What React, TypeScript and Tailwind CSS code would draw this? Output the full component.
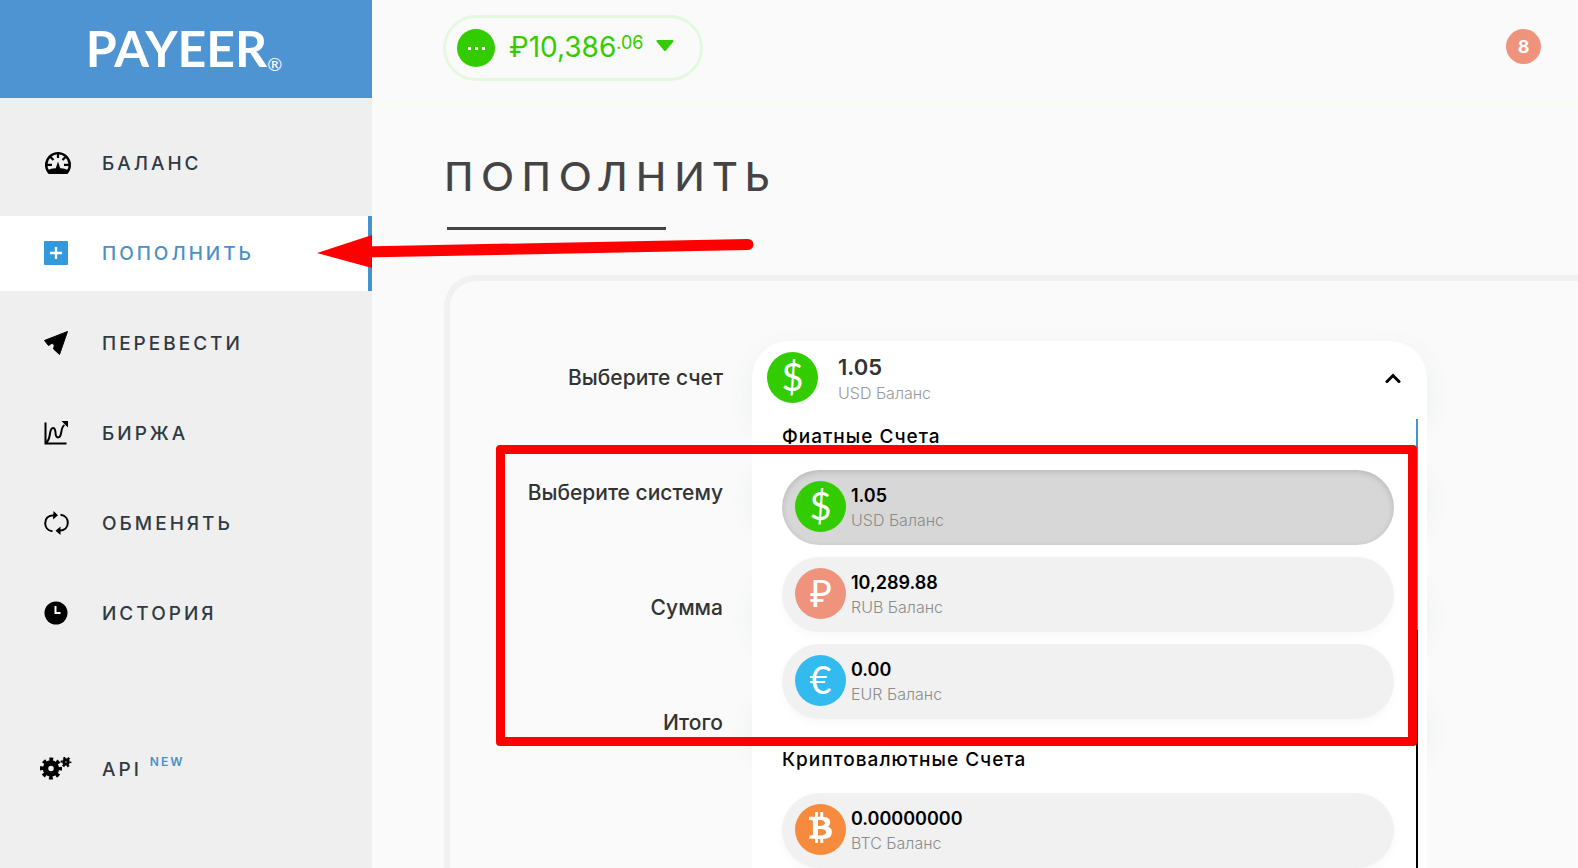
import { useState } from "react";
import type { ReactNode } from "react";
import { FaBtc } from "react-icons/fa";

type Account = {
  id: string;
  amount: string;
  label: string;
  color: string;
  icon: ReactNode;
};

const fiatAccounts: Account[] = [
  { id: "usd", amount: "1.05", label: "USD Баланс", color: "bg-[#33cc00]", icon: "$" },
  { id: "rub", amount: "10,289.88", label: "RUB Баланс", color: "bg-[#f0937c]", icon: "₽" },
  { id: "eur", amount: "0.00", label: "EUR Баланс", color: "bg-[#33bbf0]", icon: "€" },
];

const cryptoAccounts: Account[] = [
  { id: "btc", amount: "0.00000000", label: "BTC Баланс", color: "bg-[#f68b3e]", icon: <FaBtc size={31} /> },
];

function GaugeIcon() {
  return (
    <svg width="28" height="24" viewBox="0 0 28 24" fill="none" stroke="#000">
      <path d="M5 21.6A11.800 11.800 0 1 1 23 21.6Z" strokeWidth="2.4" strokeLinejoin="round" />
      <path d="M3.2 19.5Q8 17 11.800 17.3L14 10.500L16.200 17.3Q20 17 24.8 19.5L23 23H5Z" fill="#000" stroke="none" />
      <path d="M14 2v5M6.500 6l3 3M21.500 6l-3 3M3 13.800h5M25 13.800h-5" strokeWidth="2.2" />
    </svg>
  );
}

function PlusIcon() {
  return (
    <svg width="24" height="24" viewBox="0 0 24 24">
      <rect width="24" height="24" rx="1" fill="#3498db" />
      <path d="M12 6v12M6 12h12" stroke="#fff" strokeWidth="2.4" />
    </svg>
  );
}

function SendIcon() {
  return (
    <svg width="24" height="24" viewBox="0 0 24 24">
      <path d="M23.500 .5 .5 9.500 4.500 14.500Q8 11.500 9.500 12.800Q11 14 9.500 18L15.500 23.500Z" fill="#000" stroke="#000" strokeLinejoin="round" />
    </svg>
  );
}

function ChartIcon() {
  return (
    <svg width="24" height="24" viewBox="0 0 24 24" fill="none" stroke="#000" strokeWidth="2">
      <path d="M1.500 1.500v21H22.500" />
      <path d="M2 21.500C7.500 19 4.500 7 9 7S9.500 16.500 14 16.500C19 16.500 15.500 7 20.500 4" />
      <path d="M17.500 0H24V6.500Z" fill="#000" stroke="none" />
    </svg>
  );
}

function ExchangeIcon() {
  return (
    <svg width="26" height="24" viewBox="0 0 26 24" fill="none" stroke="#000" strokeWidth="2">
      <path d="M8.500 20.300C3.500 19.800 1.200 16 1.200 12.200C1.200 7.500 4.500 4.500 10 4.300" />
      <path d="M16.500 3.800C21.500 4.200 23.800 8 23.800 11.800C23.800 16.500 20.500 19.500 15.500 19.700" />
      <path d="M9.500 0 14 4.300 9 8.500ZM16.500 15.500 11.500 19.700 16.500 24Z" fill="#000" stroke="none" />
    </svg>
  );
}

function ClockIcon() {
  return (
    <svg width="24" height="24" viewBox="0 0 24 24">
      <circle cx="12" cy="12" r="11.500" fill="#000" />
      <path d="M11.500 5v7h5" stroke="#fff" strokeWidth="2" fill="none" />
    </svg>
  );
}

function GearsIcon() {
  return (
    <svg width="32" height="24" viewBox="0 0 32 24" fill="none" stroke="#000">
      <circle cx="11" cy="12.500" r="5.500" strokeWidth="5.500" />
      <circle cx="11" cy="12.500" r="9.300" strokeWidth="3.400" strokeDasharray="3.800 3.504" strokeDashoffset="1.900" />
      <circle cx="26" cy="6" r="2.200" strokeWidth="3" />
      <circle cx="26" cy="6" r="4.400" strokeWidth="2" strokeDasharray="2.200 2.408" strokeDashoffset="1.100" />
    </svg>
  );
}

const menu = [
  { title: "БАЛАНС", icon: <GaugeIcon /> },
  { title: "ПОПОЛНИТЬ", icon: <PlusIcon />, active: true },
  { title: "ПЕРЕВЕСТИ", icon: <SendIcon /> },
  { title: "БИРЖА", icon: <ChartIcon /> },
  { title: "ОБМЕНЯТЬ", icon: <ExchangeIcon /> },
  { title: "ИСТОРИЯ", icon: <ClockIcon /> },
];

function Sidebar() {
  return (
    <aside className="w-[372px] shrink-0 bg-[#efefef]">
      <a href="#" className="flex h-[98px] items-center justify-center bg-[#4f94d2] pr-1 pb-0.5 text-white">
        <span className="font-[Lato] text-[50px] leading-none font-bold">PAYEER</span>
        <span className="self-end pb-[18px] font-[Lato] text-lg leading-7">®</span>
      </a>
      <nav className="flex flex-col gap-[15px] pt-7 text-[19px] font-medium tracking-[3px] text-[#2f3a42]">
        {menu.map((item) => (
          <a
            key={item.title}
            href="#"
            className={
              item.active
                ? "flex h-[75px] items-center border-r-4 border-[#4593ce] bg-white text-[#4a90c8]"
                : "flex h-[75px] items-center"
            }
          >
            <span className="w-[102px] pb-0.5 pl-11">{item.icon}</span>
            <span className="pt-0.5">{item.title}</span>
          </a>
        ))}
        <a href="#" className="mt-[66px] flex h-[75px] items-center">
          <span className="w-[102px] pb-1 pl-10">
            <GearsIcon />
          </span>
          <span className="pt-0.5">API</span>
          <sup className="mb-1 ml-2 text-xs font-semibold tracking-[2px] text-[#4a90c8]">NEW</sup>
        </a>
      </nav>
    </aside>
  );
}

function Coin({ account }: { account: Account }) {
  return (
    <span
      className={`flex size-[51px] shrink-0 items-center justify-center rounded-full pb-1 font-[Lato] text-[38px] leading-none text-white ${account.color}`}
    >
      {account.icon}
    </span>
  );
}

type OptionProps = {
  account: Account;
  selected: boolean;
  onSelect: (account: Account) => void;
};

function AccountOption({ account, selected, onSelect }: OptionProps) {
  return (
    <button
      type="button"
      role="option"
      aria-selected={selected}
      onClick={() => onSelect(account)}
      className={
        selected
          ? "flex h-[75px] w-full items-center gap-[5px] rounded-full bg-[#d7d7d7] pb-0.5 pl-[13px] text-left shadow-[inset_0_2px_6px_rgba(0,0,0,0.15)]"
          : "flex h-[75px] w-full items-center gap-[5px] rounded-full bg-[#f1f1f1] pb-0.5 pl-[13px] text-left shadow-[0_4px_10px_rgba(0,0,0,0.03)]"
      }
    >
      <Coin account={account} />
      <span className="flex flex-col pt-0.5">
        <span className="text-lg leading-6 font-semibold text-black">{account.amount}</span>
        <span className="text-base leading-6 font-light text-[#8c8c8c]">{account.label}</span>
      </span>
    </button>
  );
}

function AccountSelect() {
  const [open, setOpen] = useState(true);
  const [current, setCurrent] = useState(fiatAccounts[0]);

  const select = (account: Account) => {
    setCurrent(account);
    setOpen(false);
  };

  return (
    <div className="relative z-10 w-full max-w-[675px]">
      <button
        id="account"
        type="button"
        aria-haspopup="listbox"
        aria-expanded={open}
        onClick={() => setOpen(!open)}
        className="flex h-[75px] w-full items-center rounded-t-[37px] bg-white pr-[26px] pb-0.5 pl-[15px] text-left shadow-[0_8px_24px_rgba(60,100,120,0.08)]"
      >
        <Coin account={current} />
        <span className="ml-5 flex flex-1 flex-col pt-0.5">
          <span className="text-[22px] leading-7 font-semibold text-[#333]">{current.amount}</span>
          <span className="text-base leading-6 font-light text-[#999]">{current.label}</span>
        </span>
        <svg width="16" height="12" viewBox="0 0 16 12" fill="none" stroke="#000" strokeWidth="3" strokeLinecap="round">
          <path d="M2 9.500 8 3.500 14 9.500" />
        </svg>
      </button>

      {open && (
        <div role="listbox" aria-labelledby="account-label" className="absolute inset-x-0 top-full bg-white pr-[33px] pb-8 pl-[30px]">
          <div className="pt-px text-[19px] leading-10 font-medium tracking-[1px] text-black">Фиатные Счета</div>
          <div className="flex flex-col gap-3 pt-[13px]">
            {fiatAccounts.map((a) => (
              <AccountOption key={a.id} account={a} selected={a.id === current.id} onSelect={select} />
            ))}
          </div>
          <div className="mt-5 pt-px text-[19px] leading-10 font-medium tracking-[1px] text-black">Криптовалютные Счета</div>
          <div className="flex flex-col gap-3 pt-[13px]">
            {cryptoAccounts.map((a) => (
              <AccountOption key={a.id} account={a} selected={a.id === current.id} onSelect={select} />
            ))}
          </div>
          {/* Полоса прокрутки списка */}
          <div className="absolute top-[3px] right-[9px] bottom-0 w-0.5 bg-black">
            <div className="h-[211px] bg-[#4593ce]" />
          </div>
        </div>
      )}
    </div>
  );
}

const fieldClass = "h-[75px] w-full max-w-[675px] appearance-none rounded-full bg-white px-8 shadow-[0_8px_24px_rgba(60,100,120,0.08)] outline-none";
const labelClass = "w-[273px] shrink-0 pb-0.5 text-right text-[21px] leading-7 font-medium text-[#333]";

function DepositForm() {
  return (
    <form className="flex flex-col gap-10 pt-[60px]">
      <div className="flex items-center gap-[29px]">
        <label id="account-label" htmlFor="account" className={labelClass}>Выберите счет</label>
        <AccountSelect />
      </div>
      <div className="flex items-center gap-[29px]">
        <label htmlFor="system" className={labelClass}>Выберите систему</label>
        <select id="system" className={fieldClass} />
      </div>
      <div className="flex items-center gap-[29px]">
        <label htmlFor="amount" className={labelClass}>Сумма</label>
        <input id="amount" className={fieldClass} />
      </div>
      <div className="flex items-center gap-[29px]">
        <label htmlFor="total" className={labelClass}>Итого</label>
        <input id="total" className={fieldClass} />
      </div>
    </form>
  );
}

function TopBar() {
  return (
    <header className="flex h-[107px] items-start justify-between border-b-8 border-[#f9fbf7] pt-[15px] pr-[37px] pl-[71px]">
      <button type="button" className="flex h-[66px] w-[260px] items-center rounded-full border-3 border-[#e4f7df] pl-[11px] text-[#33cc00]">
        <span className="flex size-[38px] items-center justify-center gap-1 rounded-full bg-[#33cc00]">
          <i className="size-[3px] bg-white" />
          <i className="size-[3px] bg-white" />
          <i className="size-[3px] bg-white" />
        </span>
        <span className="ml-3.5 flex items-start pb-0.5 leading-8">
          <span className="text-[28px]">₽10,386</span>
          <span className="text-lg leading-6">.06</span>
        </span>
        <svg className="mb-1.5 ml-3" width="18" height="11" viewBox="0 0 18 11">
          <path d="M1.500 1h15L9 10Z" fill="#33cc00" stroke="#33cc00" strokeWidth="2" strokeLinejoin="round" />
        </svg>
      </button>
      <a href="#" className="mt-3.5 flex size-[35px] items-center justify-center rounded-full bg-[#f0937c] text-lg font-bold text-white">
        8
      </a>
    </header>
  );
}

export default function App() {
  return (
    <div className="relative flex h-screen overflow-hidden bg-[#fafafa] font-['Inter','Noto_Sans',sans-serif]">
      <Sidebar />
      <div className="min-w-0 flex-1">
        <TopBar />
        <main className="pl-[72px]">
          <h1 className="pt-[45px] font-[Lato] text-[40px] leading-12 font-medium tracking-[8px] text-[#444]">ПОПОЛНИТЬ</h1>
          <div className="mt-[27px] ml-[3px] h-[3px] w-[219px] bg-[#444]" />
          <section className="relative mt-[45px] h-screen rounded-tl-[32px] border-t-6 border-l-6 border-[#f1f1f1]">
            <DepositForm />
            {/* Красная рамка вокруг фиатных счетов */}
            <div className="pointer-events-none absolute top-[164px] left-[46px] z-20 h-[301px] w-[921px] rounded-[4px] border-9 border-[#fe0000]" />
          </section>
        </main>
      </div>

      {/* Стрелка на активный пункт меню */}
      <svg className="pointer-events-none absolute top-[230px] left-[312px] z-20" width="448" height="44" viewBox="0 0 448 44">
        <path d="M50 22 436 14.500" stroke="#fe0000" strokeWidth="11" strokeLinecap="round" />
        <path d="M5 23 60 5V38Z" fill="#fe0000" />
      </svg>
    </div>
  );
}
